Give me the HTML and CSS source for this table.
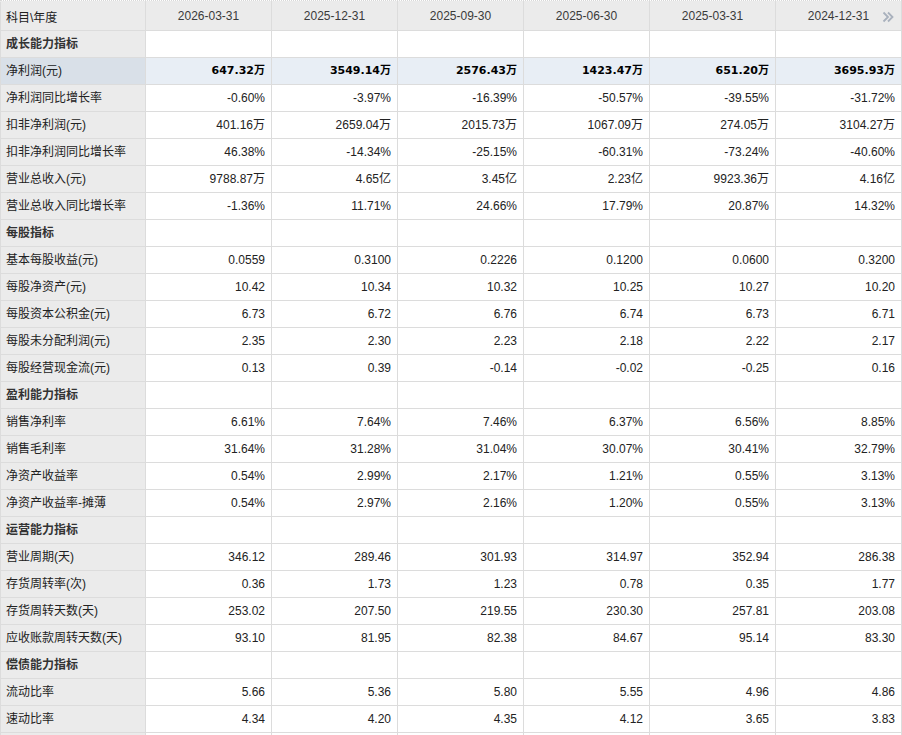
FILE: index.html
```html
<!DOCTYPE html>
<html lang="zh-CN">
<head>
<meta charset="utf-8">
<title>主要指标</title>
<link rel="stylesheet" href="styles.css">
</head>
<body>
<div class="wrap">
<table class="fin">
<colgroup>
<col class="c-label"><col class="c-val"><col class="c-val"><col class="c-val"><col class="c-val"><col class="c-val"><col class="c-val">
</colgroup>
<thead>
<tr class="head">
<th class="lbl">科目\年度</th>
<th>2026-03-31</th>
<th>2025-12-31</th>
<th>2025-09-30</th>
<th>2025-06-30</th>
<th>2025-03-31</th>
<th class="last">2024-12-31<span class="more"><svg width="12" height="12" viewBox="0 0 12 12"><path d="M1.5 1.5 L6 6 L1.5 10.5" fill="none" stroke="#a9b1bd" stroke-width="1.8"/><path d="M6 1.5 L10.5 6 L6 10.5" fill="none" stroke="#a9b1bd" stroke-width="1.8"/></svg></span></th>
</tr>
</thead>
<tbody>
<tr class="sec"><td class="lbl">成长能力指标</td><td></td><td></td><td></td><td></td><td></td><td></td></tr>
<tr class="hl"><td class="lbl">净利润(元)</td><td>647.32万</td><td>3549.14万</td><td>2576.43万</td><td>1423.47万</td><td>651.20万</td><td>3695.93万</td></tr>
<tr><td class="lbl">净利润同比增长率</td><td>-0.60%</td><td>-3.97%</td><td>-16.39%</td><td>-50.57%</td><td>-39.55%</td><td>-31.72%</td></tr>
<tr><td class="lbl">扣非净利润(元)</td><td>401.16万</td><td>2659.04万</td><td>2015.73万</td><td>1067.09万</td><td>274.05万</td><td>3104.27万</td></tr>
<tr><td class="lbl">扣非净利润同比增长率</td><td>46.38%</td><td>-14.34%</td><td>-25.15%</td><td>-60.31%</td><td>-73.24%</td><td>-40.60%</td></tr>
<tr><td class="lbl">营业总收入(元)</td><td>9788.87万</td><td>4.65亿</td><td>3.45亿</td><td>2.23亿</td><td>9923.36万</td><td>4.16亿</td></tr>
<tr><td class="lbl">营业总收入同比增长率</td><td>-1.36%</td><td>11.71%</td><td>24.66%</td><td>17.79%</td><td>20.87%</td><td>14.32%</td></tr>
<tr class="sec"><td class="lbl">每股指标</td><td></td><td></td><td></td><td></td><td></td><td></td></tr>
<tr><td class="lbl">基本每股收益(元)</td><td>0.0559</td><td>0.3100</td><td>0.2226</td><td>0.1200</td><td>0.0600</td><td>0.3200</td></tr>
<tr><td class="lbl">每股净资产(元)</td><td>10.42</td><td>10.34</td><td>10.32</td><td>10.25</td><td>10.27</td><td>10.20</td></tr>
<tr><td class="lbl">每股资本公积金(元)</td><td>6.73</td><td>6.72</td><td>6.76</td><td>6.74</td><td>6.73</td><td>6.71</td></tr>
<tr><td class="lbl">每股未分配利润(元)</td><td>2.35</td><td>2.30</td><td>2.23</td><td>2.18</td><td>2.22</td><td>2.17</td></tr>
<tr><td class="lbl">每股经营现金流(元)</td><td>0.13</td><td>0.39</td><td>-0.14</td><td>-0.02</td><td>-0.25</td><td>0.16</td></tr>
<tr class="sec"><td class="lbl">盈利能力指标</td><td></td><td></td><td></td><td></td><td></td><td></td></tr>
<tr><td class="lbl">销售净利率</td><td>6.61%</td><td>7.64%</td><td>7.46%</td><td>6.37%</td><td>6.56%</td><td>8.85%</td></tr>
<tr><td class="lbl">销售毛利率</td><td>31.64%</td><td>31.28%</td><td>31.04%</td><td>30.07%</td><td>30.41%</td><td>32.79%</td></tr>
<tr><td class="lbl">净资产收益率</td><td>0.54%</td><td>2.99%</td><td>2.17%</td><td>1.21%</td><td>0.55%</td><td>3.13%</td></tr>
<tr><td class="lbl">净资产收益率-摊薄</td><td>0.54%</td><td>2.97%</td><td>2.16%</td><td>1.20%</td><td>0.55%</td><td>3.13%</td></tr>
<tr class="sec"><td class="lbl">运营能力指标</td><td></td><td></td><td></td><td></td><td></td><td></td></tr>
<tr><td class="lbl">营业周期(天)</td><td>346.12</td><td>289.46</td><td>301.93</td><td>314.97</td><td>352.94</td><td>286.38</td></tr>
<tr><td class="lbl">存货周转率(次)</td><td>0.36</td><td>1.73</td><td>1.23</td><td>0.78</td><td>0.35</td><td>1.77</td></tr>
<tr><td class="lbl">存货周转天数(天)</td><td>253.02</td><td>207.50</td><td>219.55</td><td>230.30</td><td>257.81</td><td>203.08</td></tr>
<tr><td class="lbl">应收账款周转天数(天)</td><td>93.10</td><td>81.95</td><td>82.38</td><td>84.67</td><td>95.14</td><td>83.30</td></tr>
<tr class="sec"><td class="lbl">偿债能力指标</td><td></td><td></td><td></td><td></td><td></td><td></td></tr>
<tr><td class="lbl">流动比率</td><td>5.66</td><td>5.36</td><td>5.80</td><td>5.55</td><td>4.96</td><td>4.86</td></tr>
<tr><td class="lbl">速动比率</td><td>4.34</td><td>4.20</td><td>4.35</td><td>4.12</td><td>3.65</td><td>3.83</td></tr>
<tr><td class="lbl">&nbsp;</td><td></td><td></td><td></td><td></td><td></td><td></td></tr>
</tbody>
</table>
</div>
</body>
</html>
```

FILE: styles.css
```css
html, body {
  margin: 0;
  padding: 0;
  background: #fff;
}

.wrap {
  width: 902px;
  border-top: 1px dotted #d8d8d8;
  padding-top: 0;
}

.fin {
  width: 902px;
  table-layout: fixed;
  border-collapse: collapse;
  font-family: "Liberation Sans", "Noto Sans CJK SC", sans-serif;
  font-size: 12px;
  color: #222;
}

.c-label { width: 145px; }
.c-val { width: 126px; }

.fin th,
.fin td {
  border: 1px solid #dcdcdc;
  padding: 0 6px 0 5px;
  white-space: nowrap;
  overflow: hidden;
}

.fin td {
  height: 26px;
  text-align: right;
  line-height: 26px;
}

.head th {
  height: 28px;
  background: #ebebeb;
  font-weight: normal;
  color: #3a3a3a;
  text-align: center;
  border-top: 1px solid #ebebeb;
  padding: 0;
}

.head th.lbl {
  text-align: left;
  padding-left: 5px;
  color: #222;
}

.head th.last {
  position: relative;
}

.more {
  position: absolute;
  right: 7px;
  top: 9px;
  width: 12px;
  height: 12px;
  line-height: 0;
}

.fin td.lbl {
  text-align: left;
  background: #ebebeb;
  color: #222;
  padding-left: 5px;
}

.sec td.lbl {
  font-weight: bold;
  color: #333;
}

.hl td {
  background: #e8eef5;
  font-weight: bold;
  color: #000;
  font-family: "DejaVu Sans", "Noto Sans CJK SC", sans-serif;
  font-size: 11px;
}

.hl td.lbl {
  background: #d9e0e8;
  font-weight: normal;
  color: #222;
  font-family: "Liberation Sans", "Noto Sans CJK SC", sans-serif;
  font-size: 12px;
}
```
